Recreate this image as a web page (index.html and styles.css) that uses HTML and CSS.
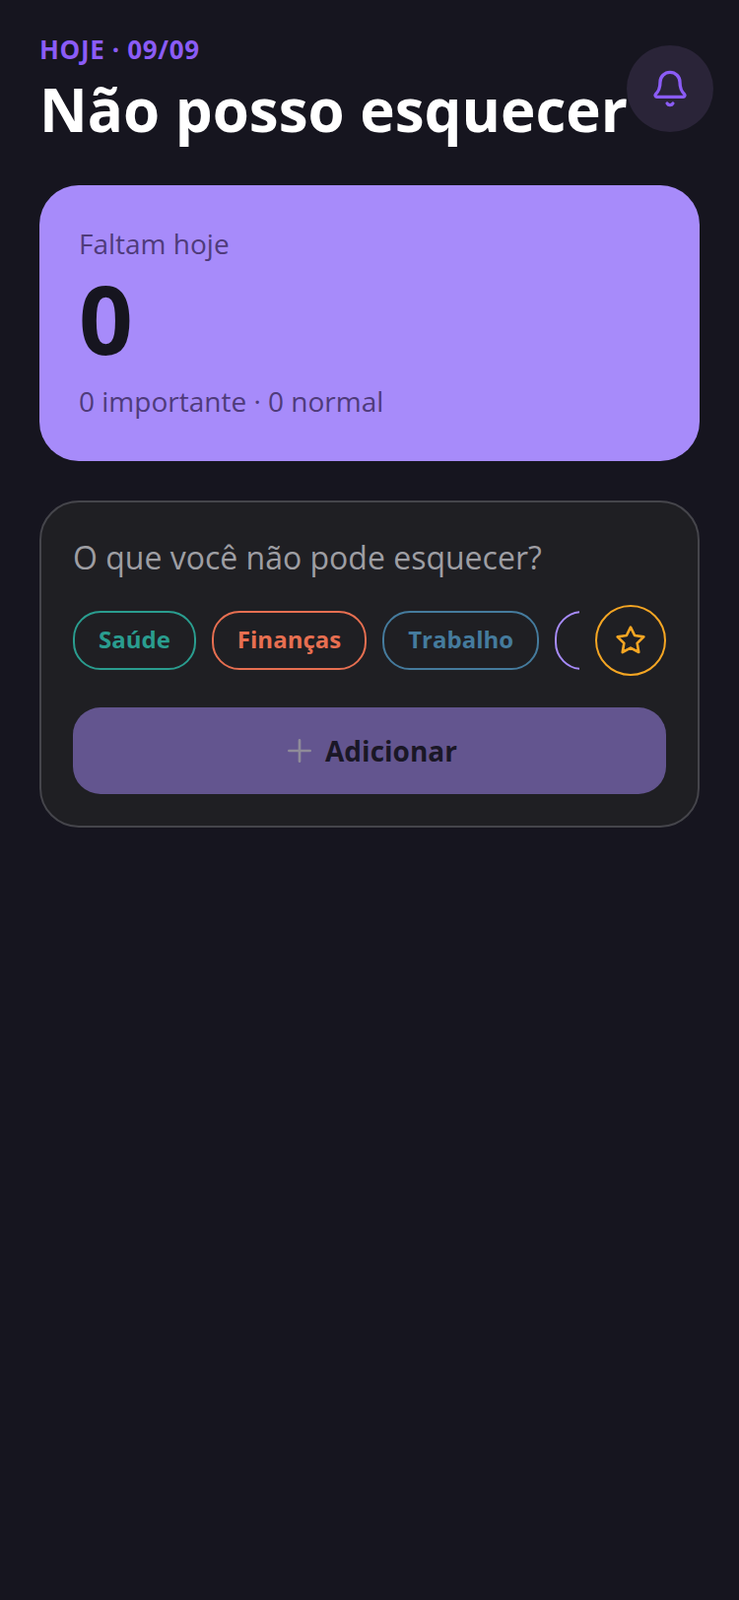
FILE: index.html
```html
<!DOCTYPE html>
<html lang="pt">
<head>
  <meta charset="UTF-8" />
  <title>Não posso esquecer</title>
  <link rel="stylesheet" href="styles.css">
</head>
<body>
  <div class="screen">
    <header class="top">
      <div class="top-text">
        <div class="date">HOJE · 09/09</div>
        <h1 class="title">Não posso esquecer</h1>
      </div>
      <button class="bell">
        <svg width="40" height="40" viewBox="0 0 24 24" fill="none" stroke="#8b5cf6" stroke-width="2" stroke-linecap="round" stroke-linejoin="round">
          <path d="M10.268 21a2 2 0 0 0 3.464 0"/>
          <path d="M3.262 15.326A1 1 0 0 0 4 17h16a1 1 0 0 0 .74-1.673C19.41 13.956 18 12.499 18 8A6 6 0 0 0 6 8c0 4.499-1.411 5.956-2.738 7.326"/>
        </svg>
      </button>
    </header>

    <section class="summary">
      <div class="summary-label">Faltam hoje</div>
      <div class="summary-count">0</div>
      <div class="summary-sub">0 importante · 0 normal</div>
    </section>

    <section class="add-card">
      <div class="placeholder">O que você não pode esquecer?</div>
      <div class="chip-row">
        <div class="chips">
          <span class="chip chip-health">Saúde</span>
          <span class="chip chip-money">Finanças</span>
          <span class="chip chip-work">Trabalho</span>
          <span class="chip chip-other">Pessoal</span>
        </div>
        <button class="star">
          <svg width="32" height="32" viewBox="0 0 24 24" fill="none" stroke="#f5a623" stroke-width="2" stroke-linecap="round" stroke-linejoin="round">
            <path d="M12 2l3.09 6.26L22 9.27l-5 4.87 1.18 6.88L12 17.77l-6.18 3.25L7 14.14 2 9.27l6.91-1.01L12 2z"/>
          </svg>
        </button>
      </div>
      <button class="add-btn">
        <svg width="32" height="32" viewBox="0 0 24 24" fill="none" stroke="#8f8b99" stroke-width="2" stroke-linecap="round">
          <path d="M12 4v16M4 12h16"/>
        </svg>
        Adicionar
      </button>
    </section>
  </div>
</body>
</html>
```

FILE: styles.css
```css
* {
  box-sizing: border-box;
}

body {
  margin: 0;
  background: #16151f;
  font-family: "Open Sans", sans-serif;
}

.screen {
  min-height: 1624px;
  padding: 32px 40px;
}

.top {
  display: flex;
  align-items: flex-start;
  margin-bottom: 39px;
}

.top-text {
  flex-shrink: 0;
}

.date {
  margin-bottom: 5px;
  font-size: 26px;
  line-height: 36px;
  font-weight: 700;
  letter-spacing: 0.65px;
  color: #8b5cf6;
}

.title {
  margin: 0;
  font-size: 60px;
  line-height: 76px;
  font-weight: 700;
  color: #fff;
  white-space: nowrap;
}

.bell {
  flex-shrink: 0;
  width: 88px;
  height: 88px;
  margin: 14px 0 0 -1px;
  padding: 0;
  border: none;
  border-radius: 50%;
  background: #2a2438;
  display: flex;
  align-items: center;
  justify-content: center;
}

.summary {
  height: 280px;
  padding: 40px;
  border-radius: 40px;
  background: #a78bfa;
}

.summary-label,
.summary-sub {
  font-size: 28px;
  line-height: 38px;
  color: #4f3b7a;
}

.summary-count {
  margin: 2px 0 10px;
  font-size: 96px;
  line-height: 110px;
  font-weight: 700;
  color: #16151f;
}

.add-card {
  margin-top: 40px;
  height: 332px;
  padding: 32px;
  border: 2px solid #45454b;
  border-radius: 40px;
  background: #1f1f23;
}

.placeholder {
  font-size: 32px;
  line-height: 48px;
  color: #9e9ea3;
}

.chip-row {
  display: flex;
  align-items: center;
  gap: 16px;
  margin-top: 24px;
}

.chips {
  flex: 1;
  display: flex;
  gap: 16px;
  overflow: hidden;
}

.chip {
  flex-shrink: 0;
  height: 60px;
  padding: 0 24px;
  border: 2px solid;
  border-radius: 28px;
  font-size: 24px;
  line-height: 54px;
  font-weight: 700;
}

.chip-health {
  color: #2a9d8f;
  border-color: #2a9d8f;
}

.chip-money {
  color: #e76f51;
  border-color: #e76f51;
}

.chip-work {
  color: #457b9d;
  border-color: #457b9d;
}

.chip-other {
  color: #a78bfa;
  border-color: #a78bfa;
}

.star {
  flex-shrink: 0;
  width: 72px;
  height: 72px;
  padding: 0;
  border: 2px solid #f5a623;
  border-radius: 50%;
  background: none;
  display: flex;
  align-items: center;
  justify-content: center;
}

.add-btn {
  width: 100%;
  height: 88px;
  margin-top: 32px;
  padding: 0 0 0 2px;
  border: none;
  border-radius: 28px;
  background: #63558f;
  color: #1a1726;
  font-family: inherit;
  font-size: 28px;
  font-weight: 700;
  display: flex;
  align-items: center;
  justify-content: center;
  gap: 10px;
}
```
